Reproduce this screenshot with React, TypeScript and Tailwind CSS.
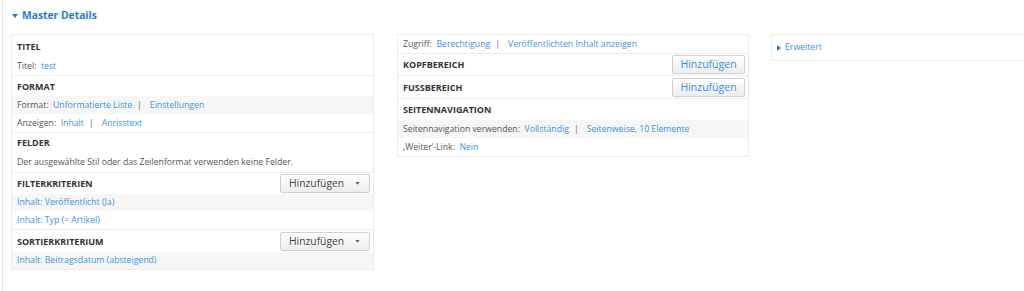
import React from 'react';

const font = { fontFamily: '"Open Sans", "Noto Sans", sans-serif' };

function AddButton({ dark }: { dark?: boolean }) {
  if (dark) {
    return (
      <button className="flex h-[19px] w-[90px] shrink-0 items-center justify-between rounded-[2px] border border-[#d0d0d0] bg-gradient-to-b from-white to-[#ededed] pl-[8px] pr-[9px] text-[10.3px] text-[#444]">
        <span>Hinzufügen</span>
        <svg width="5" height="3" viewBox="0 0 6 4"><path d="M0 0h6L3 3.5z" fill="#666" /></svg>
      </button>
    );
  }
  return (
    <button className="flex h-[19px] w-[73px] shrink-0 items-center justify-center rounded-[2px] border border-[#d0d0d0] bg-gradient-to-b from-white to-[#ededed] text-[10.5px] text-[#3a8ed8]">
      Hinzufügen
    </button>
  );
}

function Row({ children, gray, h = 'h-[18px]' }: { children: React.ReactNode; gray?: boolean; h?: string }) {
  return (
    <div className={`flex ${h} items-center whitespace-nowrap px-[5px] text-[8.7px] text-[#555] ${gray ? 'bg-[#f6f6f6]' : ''}`}>
      {children}
    </div>
  );
}

function Head({ title, h, first, children }: { title: string; h: string; first?: boolean; children?: React.ReactNode }) {
  return (
    <div className={`flex ${h} items-center justify-between pl-[5px] pr-[3px] ${first ? '' : 'border-t border-[#ececec]'}`}>
      <span className="text-[9px] font-bold text-[#333]">{title}</span>
      {children}
    </div>
  );
}

const A = ({ children }: { children: React.ReactNode }) => <span className="text-[#3d93dc]">{children}</span>;
const Sep = () => <span className="ml-[5px] mr-[8px] text-[#666]">|</span>;

export default function App() {
  return (
    <div className="h-[291px] w-[1024px] overflow-hidden bg-white" style={font}>
      <div className="ml-[2px] h-full border-l border-[#e4e4e4] pl-[8px] pt-[8px]">
        <div className="flex items-center gap-[4px] pl-[1px] text-[10.3px] font-bold text-[#1f7fca]">
          <svg width="6" height="4" viewBox="0 0 6 4"><path d="M0 0h6L3 4z" fill="#1f7fca" /></svg>
          <span>Master Details</span>
        </div>
        <div className="mt-[11px] flex items-start">
          {/* left column */}
          <div className="w-[363px] shrink-0 border border-[#ececec]">
            <Head title="TITEL" h="h-[22px]" first />
            <Row>Titel:&nbsp;&nbsp;<A>test</A></Row>
            <Head title="FORMAT" h="h-[21px]" />
            <Row gray>Format:&nbsp;&nbsp;<A>Unformatierte Liste</A><Sep /><A>Einstellungen</A></Row>
            <Row>Anzeigen:&nbsp;&nbsp;<A>Inhalt</A><Sep /><A>Anrisstext</A></Row>
            <Head title="FELDER" h="h-[20px]" />
            <Row h="h-[20px]">Der ausgewählte Stil oder das Zeilenformat verwenden keine Felder.</Row>
            <Head title="FILTERKRITERIEN" h="h-[22px]">
              <AddButton dark />
            </Head>
            <Row gray h="h-[17px]"><A>Inhalt: Veröffentlicht (Ja)</A></Row>
            <Row><A>Inhalt: Typ (= Artikel)</A></Row>
            <Head title="SORTIERKRITERIUM" h="h-[23px]">
              <AddButton dark />
            </Head>
            <Row gray h="h-[17px]"><A>Inhalt: Beitragsdatum (absteigend)</A></Row>
          </div>

          {/* middle column */}
          <div className="ml-[23px] w-[352px] shrink-0 border border-[#ececec]">
            <Row>Zugriff:&nbsp;&nbsp;<A>Berechtigung</A><Sep /><A>Veröffentlichten Inhalt anzeigen</A></Row>
            <Head title="KOPFBEREICH" h="h-[22px]">
              <AddButton />
            </Head>
            <Head title="FUSSBEREICH" h="h-[23px]">
              <AddButton />
            </Head>
            <Head title="SEITENNAVIGATION" h="h-[22px]" />
            <Row gray>Seitennavigation verwenden:&nbsp;&nbsp;<A>Vollständig</A><Sep /><A>Seitenweise, 10 Elemente</A></Row>
            <Row>‚Weiter‘-Link:&nbsp;&nbsp;<A>Nein</A></Row>
          </div>

          {/* right column */}
          <div className="ml-[22px] flex h-[27px] w-[260px] shrink-0 items-center gap-[4px] border border-[#ececec] pl-[5px]">
            <svg width="4" height="6" viewBox="0 0 4 6"><path d="M0 0l4 3-4 3z" fill="#1f7fca" /></svg>
            <span className="text-[8.7px] text-[#3d93dc]">Erweitert</span>
          </div>
        </div>
      </div>
    </div>
  );
}
